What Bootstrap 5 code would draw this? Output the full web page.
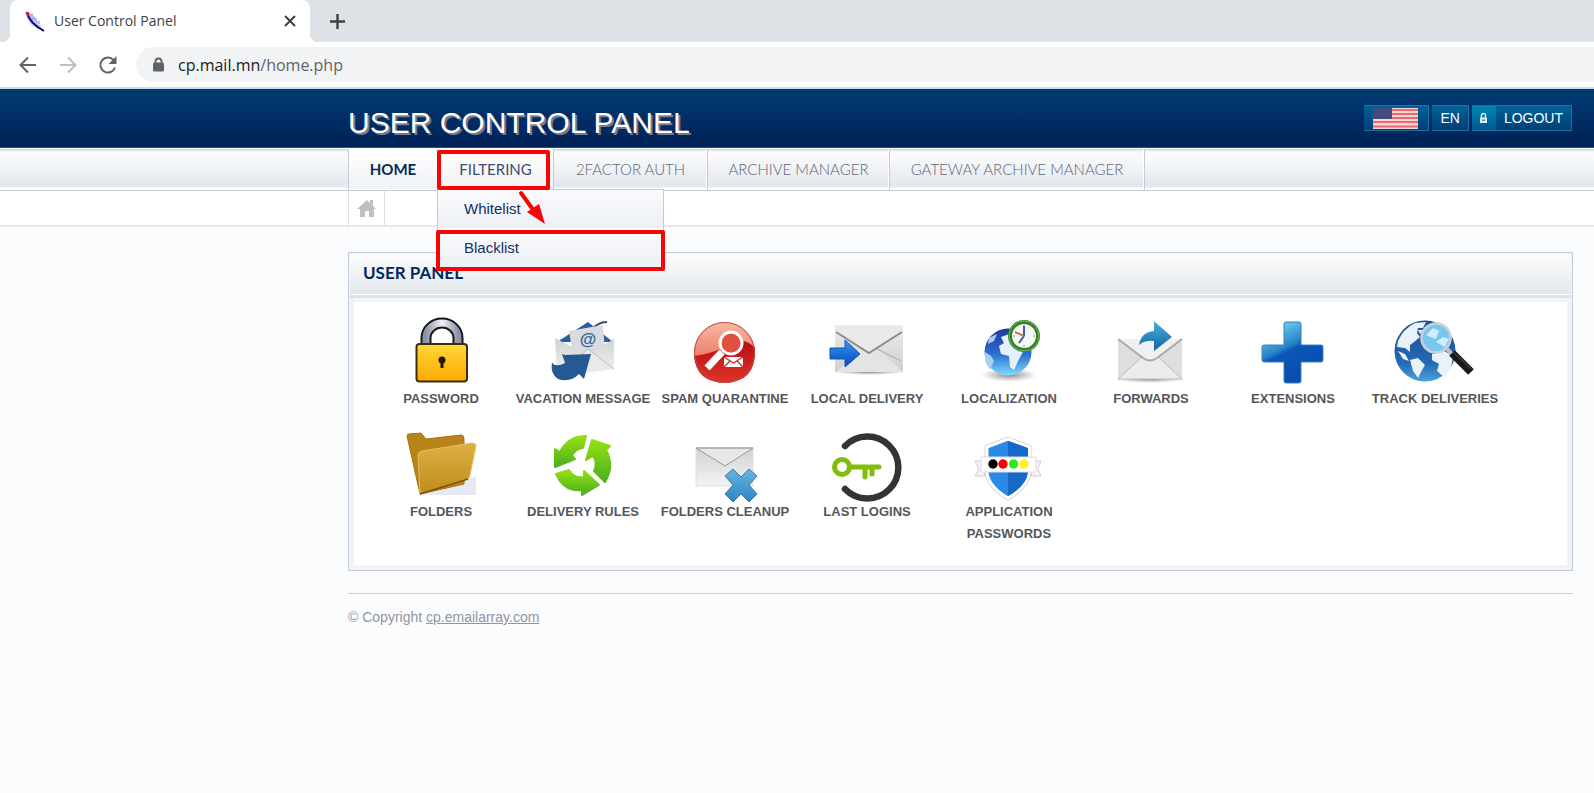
<!DOCTYPE html>
<html lang="en">
<head>
<meta charset="utf-8">
<meta name="viewport" content="width=device-width, initial-scale=1">
<title>User Control Panel</title>
<link href="https://cdn.jsdelivr.net/npm/bootstrap@5.3.0/dist/css/bootstrap.min.css" rel="stylesheet">
<style>
:root{--edge:#c3cbd8;--navy:#002b5c;--indent:348px;--outdent:21px}
body{background:#fbfcfe;font-family:"Liberation Sans",Arial,sans-serif;font-size:14px;min-height:100vh}
.tabstrip{background:#dee1e6;height:42px;padding-left:10px}
.browser-tab{position:relative;background:#fff;width:300px;border-radius:8px 8px 0 0;padding:0 12px 0 14px;font:14px/20px "Open Sans","Noto Sans",sans-serif;color:#3c4043}
.browser-tab::before,.browser-tab::after{content:"";position:absolute;bottom:0;width:8px;height:8px}
.browser-tab::before{left:-8px;background:radial-gradient(circle at 0 0,transparent 8px,#fff 8px)}
.browser-tab::after{right:-8px;background:radial-gradient(circle at 100% 0,transparent 8px,#fff 8px)}
.plain{background:none;border:0;padding:0;display:flex;align-items:center;justify-content:center}
.toolbar{background:#fff;height:47px;border-bottom:2px solid #d0dbe8;padding-left:16px;gap:16px}
.address{background:#f1f3f4;border-radius:18px 0 0 18px;height:35px;padding-left:16px;gap:13px;font:16px/24px "Open Sans","Noto Sans",sans-serif;color:#5f6368}
.address b{font-weight:400;color:#202124}
.inset-page{padding-left:var(--indent);padding-right:var(--outdent)}
.masthead{height:59px;background:linear-gradient(#003b73,#002257);border-bottom:1px solid #3c4a75}
.masthead h1{font-size:30px;line-height:34px;color:#fff;text-shadow:2px 2px 0 #77788c;margin:10px 0 0}
.sysbar{gap:3px;padding-right:1px}
.sysbtn{height:26px;border:1px solid #21709c;border-left-width:0;border-radius:0;background:linear-gradient(#00629a,#003f78);color:#fff;font-size:14px;line-height:20px;padding:0 8px;display:flex;align-items:center;text-decoration:none}
.sysbtn:hover{color:#fff}
.lockpart{background:linear-gradient(#0086b3,#005a93);width:24px;height:24px}
.mainnav{height:43px;border-top:1px solid #fff;border-bottom:1px solid #c6cbd3;background:linear-gradient(#d0d4da 0,#eff1f3 2px,#fbfcfd 4px,#e2e6ed 38px,#fff 39px);font-family:Lato,sans-serif}
.mainnav ul{height:41px}
.mainnav li{border-right:1px solid var(--edge);box-shadow:inset -1px 0 #fff;position:relative}
.mainnav li:first-child{border-left:1px solid var(--edge)}
.mainnav .nav-link{font-size:15px;line-height:24px;font-weight:300;color:#5c667c;padding:8px 0 0;text-align:center}
.mainnav .nav-link.active{font-weight:700;color:var(--navy);background:linear-gradient(#fff,#f0f2f6);height:40px}
.mainnav .nav-link.opened{font-weight:400;color:#3b4c70;background:linear-gradient(#fff,#f0f2f6);height:40px}
.w-a{width:90px}.w-b{width:116px}.w-c{width:154px}.w-d{width:182px}.w-e{width:255px}
.submenu{display:block;position:absolute;top:40px;left:-1px;width:227px;min-width:0;padding:0;margin:0;border:1px solid var(--edge);border-bottom:0;border-radius:0;background:none;z-index:5;font-family:"Liberation Sans",Arial,sans-serif}
.submenu .dropdown-item{font-size:15px;line-height:38px;padding:0 26px;color:#123063;height:39px;border-bottom:1px solid #fff;background:linear-gradient(#fafbfd,#eceff4)}
.marker{position:absolute;border:4px solid #f90406;border-radius:2px;z-index:6;pointer-events:none}
.mark-top{left:-1px;right:3px;top:1px;height:40px}
.mark-item{left:-2px;right:-2px;top:40px;height:41px}
.pointer{position:absolute;left:79px;top:39px;z-index:7;pointer-events:none}
.crumbs{background:#fff;height:36px;border-bottom:2px solid #e4e7eb}
.crumb-home{width:37px;height:34px;border:1px solid #dadde2;border-width:0 1px}
.userpanel{margin-top:25px;border:1px solid var(--edge);background:#f1f3f8;padding:1px 1px 5px}
.userpanel h2{font:700 17px/38px Lato,sans-serif;color:var(--navy);margin:0;padding:0 13px;height:40px;background:linear-gradient(#fcfcfd,#e2e6ec)}
.rule2{border-top:1px solid #fff;height:4px;background:#dde2ea}
.tiles{background:#fff;margin:4px 4px 0;padding:16px 16px 20px;display:grid;grid-template-columns:repeat(auto-fill,142px);row-gap:21px}
.tile{text-align:center;text-decoration:none;color:#55565a;font-weight:700;font-size:13px;line-height:22px}
.tile svg{display:block;width:90px;height:70px;margin:0 auto;overflow:visible}
.tile span{display:block}
footer{border-top:1px solid #c3cfe0;margin-top:22px;padding-top:13px;color:#8f959e;line-height:20px}
footer a{color:#8f959e}
</style>
</head>
<body>
<svg width="0" height="0" class="position-absolute" aria-hidden="true"><defs>
<linearGradient id="gold" x2="0" y2="1"><stop stop-color="#ffd83a"/><stop offset="1" stop-color="#fca800"/></linearGradient>
<linearGradient id="steel"><stop stop-color="#8d93a6"/><stop offset=".5" stop-color="#f2f3f7"/><stop offset="1" stop-color="#8d93a6"/></linearGradient>
<linearGradient id="paper" x2="0" y2="1"><stop stop-color="#ededed"/><stop offset="1" stop-color="#cfcfcf"/></linearGradient>
<linearGradient id="paper2" x2="0" y2="1"><stop stop-color="#d2d2d2"/><stop offset="1" stop-color="#f4f4f4"/></linearGradient>
<linearGradient id="redtop" x2="0" y2="1"><stop stop-color="#f9b7a4"/><stop offset="1" stop-color="#e5533e"/></linearGradient>
<linearGradient id="redlow" x2="0" y2="1"><stop stop-color="#b80d12"/><stop offset="1" stop-color="#e0332a"/></linearGradient>
<linearGradient id="blu" x2="0" y2="1"><stop stop-color="#2f9af5"/><stop offset="1" stop-color="#0846b8"/></linearGradient>
<linearGradient id="teal" x2="0" y2="1"><stop stop-color="#46b1dd"/><stop offset="1" stop-color="#14669f"/></linearGradient>
<linearGradient id="cross" x2=".5" y2="1"><stop offset=".1" stop-color="#7ad4ee"/><stop offset=".48" stop-color="#2784ca"/><stop offset=".56" stop-color="#0a56b8"/><stop offset="1" stop-color="#0a4cae"/></linearGradient>
<linearGradient id="globe" x2="0" y2="1"><stop stop-color="#2039a0"/><stop offset=".55" stop-color="#2b70d0"/><stop offset="1" stop-color="#7fdcfb"/></linearGradient>
<linearGradient id="globe2" x2="0" y2="1"><stop stop-color="#1c4f92"/><stop offset=".7" stop-color="#2469b4"/><stop offset="1" stop-color="#49a3dc"/></linearGradient>
<linearGradient id="ochre" x2="0" y2="1"><stop stop-color="#dfb044"/><stop offset="1" stop-color="#bf8b1b"/></linearGradient>
<linearGradient id="leaf" x2="0" y2="1"><stop stop-color="#95e012"/><stop offset="1" stop-color="#4cae22"/></linearGradient>
<linearGradient id="sky" x2="0" y2="1"><stop stop-color="#63b5e4"/><stop offset="1" stop-color="#2c86c4"/></linearGradient>
<radialGradient id="shade"><stop stop-color="#555" stop-opacity=".7"/><stop offset="1" stop-color="#777" stop-opacity="0"/></radialGradient>
</defs></svg>

<div class="tabstrip d-flex">
  <div class="browser-tab d-flex align-items-center">
    <svg width="22" height="24" viewBox="0 0 22 24" class="me-2"><path d="M2 3C8 4 13 9 16 20 9 19 3 13 2 3Z" fill="#c3c3f5"/><path d="M2 5l3-1 1 3 2-1 1 4 3-1 0 4 3 0 1 6" fill="none" stroke="#9c9ce6" stroke-width="2" stroke-dasharray="1 1"/><path d="M3 4C5 12 11 17 20 22" fill="none" stroke="#0b0b6e" stroke-width="2"/><path d="M2 3l3 1-1 3Z" fill="#c22" stroke="#c22"/></svg>
    <span>User Control Panel</span>
    <button class="plain ms-auto" aria-label="Close tab"><svg width="16" height="16" viewBox="0 0 16 16"><path d="M3 3l10 10M13 3L3 13" stroke="#3c4043" stroke-width="2"/></svg></button>
  </div>
  <button class="plain ms-3" aria-label="New tab"><svg width="22" height="22" viewBox="0 0 22 22"><path d="M11.500 4v15M4 11.500h15" stroke="#3c4043" stroke-width="2.400"/></svg></button>
</div>
<div class="toolbar d-flex align-items-center">
  <button class="plain" aria-label="Back"><svg width="24" height="24" viewBox="0 0 24 24"><path d="M20 12H5M12 4.500L4.500 12 12 19.500" fill="none" stroke="#5f6368" stroke-width="2"/></svg></button>
  <button class="plain" aria-label="Forward"><svg width="24" height="24" viewBox="0 0 24 24"><path d="M4 12h15M12 4.500L19.500 12 12 19.500" fill="none" stroke="#bcbec1" stroke-width="2"/></svg></button>
  <button class="plain" aria-label="Reload"><svg width="24" height="24" viewBox="0 0 24 24"><path d="M19 14.500A7.500 7.500 0 1 1 17.500 7" fill="none" stroke="#5f6368" stroke-width="2"/><path d="M20.500 3v8h-8Z" fill="#5f6368"/></svg></button>
  <div class="address d-flex align-items-center flex-fill" role="textbox" aria-label="Address">
    <svg width="13" height="16" viewBox="0 0 13 16"><path d="M3.500 7V4.500a3 3 0 0 1 6 0V7" fill="none" stroke="#5f6368" stroke-width="1.800"/><rect x="1" y="5.500" width="11" height="9" rx="1.500" fill="#5f6368"/></svg>
    <span><b>cp.mail.mn</b>/home.php</span>
  </div>
</div>

<header class="masthead inset-page d-flex align-items-center">
  <h1>USER CONTROL PANEL</h1>
  <div class="sysbar ms-auto d-flex">
    <button class="sysbtn" aria-label="Language flag"><svg width="48" height="22" viewBox="0 0 48 22"><path fill="#f6d5d3" d="M1 1h45v21H1z"/><path d="M1 3h45M1 7h45M1 11h45M1 15h45M1 19.500h45" stroke="#e86a70" stroke-width="2"/><path fill="#474b7c" d="M1 1h19v11H1z"/></svg></button>
    <button class="sysbtn">EN</button>
    <a class="sysbtn ps-0" href="#"><span class="lockpart d-flex align-items-center justify-content-center me-2"><svg width="9" height="12" viewBox="0 0 9 12"><path d="M2.500 6V3.500a2 2 0 0 1 4 0V6" fill="none" stroke="#d9edf5" stroke-width="1.500"/><path d="M1 5.500h7v5.500H1z" fill="#d9edf5"/><path d="M3 8.200h3" stroke="#0a6a9a"/></svg></span>LOGOUT</a>
  </div>
</header>

<nav class="mainnav inset-page">
  <ul class="nav flex-nowrap">
    <li class="w-a"><a class="nav-link active" href="#">HOME</a></li>
    <li class="w-b"><a class="nav-link opened" href="#" aria-expanded="true">FILTERING</a>
      <div class="submenu dropdown-menu">
        <a class="dropdown-item" href="#">Whitelist</a>
        <a class="dropdown-item" href="#">Blacklist</a>
        <div class="marker mark-item"></div>
      </div>
      <div class="marker mark-top"></div>
      <svg class="pointer" width="30" height="42" viewBox="0 0 30 42"><path d="M4 5l13 18" stroke="#f90406" stroke-width="4" stroke-linecap="round"/><path d="M10 24l12-8 6 20Z" fill="#f90406"/></svg>
    </li>
    <li class="w-c"><a class="nav-link" href="#">2FACTOR AUTH</a></li>
    <li class="w-d"><a class="nav-link" href="#">ARCHIVE MANAGER</a></li>
    <li class="w-e"><a class="nav-link" href="#">GATEWAY ARCHIVE MANAGER</a></li>
  </ul>
</nav>
<div class="crumbs inset-page">
  <a class="crumb-home d-flex align-items-center justify-content-center" href="#" aria-label="Home"><svg width="20" height="20" viewBox="0 0 20 20"><path d="M0 11l10-9 3 3V2h3v6l3 3h-2v8h-5v-6H8v6H3v-8Z" fill="#bfc0c2"/></svg></a>
</div>

<main class="inset-page">
  <section class="userpanel">
    <h2>USER PANEL</h2>
    <div class="rule2"></div>
    <div class="tiles">
      <a class="tile" href="#"><svg viewBox="0 0 90 70"><path d="M30 30V20a16 15 0 0 1 32 0v10" fill="none" stroke="#15171c" stroke-width="11"/><path d="M30 30V20a16 15 0 0 1 32 0v10" fill="none" stroke="url(#steel)" stroke-width="7"/><rect x="20.500" y="26" width="50.500" height="37.500" rx="3" fill="url(#gold)" stroke="#3c2c08" stroke-width="2"/><circle cx="46" cy="42" r="3.500" fill="#241600"/><path d="M46 42v8" stroke="#241600" stroke-width="3"/></svg><span>PASSWORD</span></a>
      <a class="tile" href="#"><svg viewBox="0 0 90 70"><path d="M19 24L50 4 75 24Z" fill="#2b5f9e"/><path d="M56 9q6-5 13-5" fill="none" stroke="#444f60" stroke-width="2"/><path d="M31 13l34-6 2 28-32 2Z" fill="#d8dbe0"/><path d="M17 20l32 17 27-16v30l-57 8Z" fill="url(#paper2)"/><path d="M19 58l31-27 26 20" fill="#e9e9e9" stroke="#bfbfbf"/><text x="50" y="27" text-anchor="middle" font-family="Liberation Sans" font-weight="700" font-size="17" fill="#2f659f">@</text><path d="M14 44l1 2q5 3 12-1l-3-9 3 1 26-1-7 25-5-5Q32 65 20 61 12 56 14 44Z" fill="#245994"/></svg><span>VACATION MESSAGE</span></a>
      <a class="tile" href="#"><svg viewBox="0 0 90 70"><circle cx="44.500" cy="34.500" r="30.500" fill="url(#redtop)"/><path d="M14 38Q40 34 50 25 64 18 75 30 77 64 44.500 65 16 64 14 38Z" fill="url(#redlow)"/><circle cx="44.500" cy="34.500" r="30" fill="none" stroke="#b84a42"/><circle cx="51" cy="25" r="9.500" fill="#e0503f"/><path d="M44 39h19v10H44Z" fill="#fff"/><path d="M44 39l9.500 6 9.500-6M44 49l6-6M63 49l-6-6" fill="none" stroke="#cb2b26" stroke-width="1.300"/><circle cx="51" cy="25" r="11" fill="none" stroke="#fff" stroke-width="3"/><path d="M42 34L27 50" stroke="#fff" stroke-width="7"/></svg><span>SPAM QUARANTINE</span></a>
      <a class="tile" href="#"><svg viewBox="0 0 90 70"><ellipse cx="47" cy="54" rx="36" ry="3" fill="url(#shade)"/><path d="M13 7h68v47H13Z" fill="url(#paper)"/><path d="M14 54l25-24 8 5 8-5 26 24Z" fill="#e4e4e4"/><path d="M55 31l24 12" stroke="#aaa" stroke-width="1"/><path d="M14 8h66v6L47 35 14 14Z" fill="#e9e9e9"/><path d="M14 14l33 21 33-21" fill="none" stroke="#8c8c8c" stroke-width="2"/><path d="M8 30h15v-8l15 14-15 13v-8H8Z" fill="url(#blu)" stroke="#1259ad"/></svg><span>LOCAL DELIVERY</span></a>
      <a class="tile" href="#"><svg viewBox="0 0 90 70"><ellipse cx="45" cy="57" rx="28" ry="7" fill="url(#shade)"/><circle cx="44" cy="34" r="23.500" fill="url(#globe)"/><path d="M37 19l8-3 10 6 5 10-6 11-4 9-4-3-1-11-8-2-2-8 5-3Z" fill="#e5f0fc"/><path d="M21 34l6 4 3 5-4 9-5-9ZM25 20l8-4-3 7-6 3Z" fill="#a9cef2"/><circle cx="60" cy="18" r="14" fill="#f5f8f5" stroke="#318025" stroke-width="4"/><circle cx="60" cy="18" r="15" fill="none" stroke="#7bb95b"/><path d="M60 7v2M60 27v2M49 18h2M69 18h2" stroke="#888"/><path d="M60 18V8M60 18l-5 7" stroke="#3c5ab0" stroke-width="2"/><path d="M60 18l-9-4" stroke="#be5a4e" stroke-width="1.500"/></svg><span>LOCALIZATION</span></a>
      <a class="tile" href="#"><svg viewBox="0 0 90 70"><ellipse cx="44" cy="61" rx="36" ry="4" fill="url(#shade)"/><path d="M12 21h64v40H12Z" fill="#dedede"/><path d="M12 61l26-24h12l26 24Z" fill="#ececec" stroke="#bbb"/><path d="M12 21h64L51 40q-7 5-14 0Z" fill="#f0f0f0"/><path d="M12 21l25 19q7 5 14 0l25-19" fill="none" stroke="#aaa" stroke-width="2"/><path d="M33 27Q35 14 48 13V3l18 16-18 14V23q-9-1-15 4Z" fill="url(#teal)"/></svg><span>FORWARDS</span></a>
      <a class="tile" href="#"><svg viewBox="0 0 90 70"><path d="M38 4h13q2 0 2 2v21h20q2 0 2 2v13q0 2-2 2H53v19q0 2-2 2H38q-2 0-2-2V44H16q-2 0-2-2V29q0-2 2-2h20V6q0-2 2-2Z" fill="url(#cross)" stroke="#3184bb"/></svg><span>EXTENSIONS</span></a>
      <a class="tile" href="#"><svg viewBox="0 0 90 70"><circle cx="35" cy="33" r="30.500" fill="url(#globe2)"/><path d="M8 23q5-12 17-18l11-1-3 6-5 0-1 5 3 4-6 5-4 3 0 7-5-4-8-1ZM20 42l8-2 7 7-4 7-3 6-5-7ZM42 36l12-3 9 5-2 12-7 9-7-6 2-7-7-4ZM28 12l5 0-3 4ZM8 33l7 3 4 7-6-2Z" fill="#eaf2f9"/><circle cx="46" cy="20" r="14.500" fill="#78c8ee"/><path d="M36 17l7-7 6 3-3 8ZM46 24l7-5 6 2-4 8Z" fill="#d1edfb"/><circle cx="46" cy="20" r="14.500" fill="none" stroke="#c6d1da" stroke-width="2.500"/><path d="M57 31l5 5" stroke="#bec4cb" stroke-width="4"/><path d="M62 35l19 19" stroke="#18191b" stroke-width="8"/><path d="M62 33l19 18" stroke="#555" stroke-width="1"/></svg><span>TRACK DELIVERIES</span></a>
      <a class="tile" href="#"><svg viewBox="0 0 90 70"><path d="M24 64l56-19v19Z" fill="#e6e9f2"/><path d="M11 5q0-2 2-2l12-1 5 6 35-4q3 0 3 4v45L24 63Z" fill="#b88319" stroke="#a7730f" stroke-width="1"/><path d="M22 24q0-3 4-4l50-8q4 0 4 3l-6 29q0 3-3 4L24 63Z" fill="url(#ochre)" stroke="#e6c064" stroke-width="1"/><path d="M24 63l48-15" stroke="#75500b" stroke-width="1.500"/></svg><span>FOLDERS</span></a>
      <a class="tile" href="#"><svg viewBox="0 0 90 70"><g fill="url(#leaf)" stroke="url(#leaf)" stroke-width="2" stroke-linejoin="round"><path d="M48 5l-3 12q-8 1-11 8l3 3-20 8V18l5 3Q30 5 48 5Z"/><path d="M54 9l18 6-4 4q9 16-1 32L56 40q4-8-1-15l-7 4Z"/><path d="M18 43l13-4q6 9 15 7v-6l15 14-17 10v-5Q26 61 18 43Z"/></g></svg><span>DELIVERY RULES</span></a>
      <a class="tile" href="#"><svg viewBox="0 0 90 70"><path d="M16 17h57v38H16Z" fill="url(#paper2)" stroke="#ddd"/><path d="M16 17h57L45 35Z" fill="#e7e7e7" stroke="#999"/><path d="M16 17h57" stroke="#aaa"/><path d="M53 38l8 8 8-8 8 7-8 9 8 9-8 8-8-8-8 8-8-8 8-9-8-9Z" fill="url(#sky)" stroke="#51748e"/></svg><span>FOLDERS CLEANUP</span></a>
      <a class="tile" href="#"><svg viewBox="0 0 90 70"><path d="M23 15a31 31 0 1 1 0 43" fill="none" stroke="#333435" stroke-width="6.500" stroke-linecap="round"/><g fill="none" stroke="#7fbe0b"><circle cx="20" cy="36" r="7.500" stroke-width="5"/><path d="M28 36h29M43 37v9M50 37v6" stroke-width="5" stroke-linecap="round"/></g></svg><span>LAST LOGINS</span></a>
      <a class="tile" href="#"><svg viewBox="0 0 90 70"><path d="M44 8l21 8v26q-2 14-21 25-19-11-21-25V16Z" fill="#1f82df" stroke="#dadada" stroke-width="5"/><path d="M44 8l21 8v26q-2 14-21 25-19-11-21-25V16Z" fill="#2b8ae6" stroke="#fff" stroke-width="3"/><path d="M44 10l20 7v25q-2 13-20 23Z" fill="#156ac7"/><path d="M18 30l-7 0 4 8-4 7h10ZM71 30l6 0-3 8 3 7H67Z" fill="#f4f4f4" stroke="#cfcfcf"/><path d="M17 26h55v15H17Z" fill="#fff" stroke="#ddd"/><circle cx="29" cy="33" r="4.700"/><circle cx="39" cy="33" r="4.700" fill="#f00"/><circle cx="49.500" cy="33" r="4.700" fill="#2bea18"/><circle cx="60" cy="33" r="4.700" fill="#fdf219"/></svg><span>APPLICATION<br>PASSWORDS</span></a>
    </div>
  </section>
  <footer>© Copyright <a href="#">cp.emailarray.com</a></footer>
</main>
<script src="https://cdn.jsdelivr.net/npm/bootstrap@5.3.0/dist/js/bootstrap.bundle.min.js"></script>
</body>
</html>
